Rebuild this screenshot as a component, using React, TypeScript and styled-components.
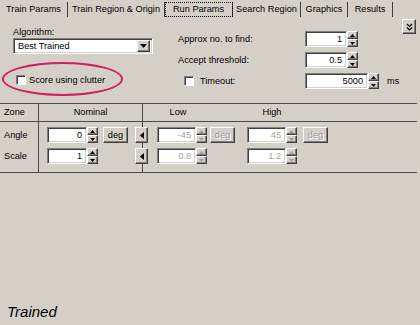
import React from 'react';
import styled, { createGlobalStyle, css } from 'styled-components';

const Global = createGlobalStyle`
  html, body { margin: 0; padding: 0; background: #d4d0c8; }
  body { font-family: "Liberation Sans", Arial, sans-serif; }
`;

const Window = styled.div`
  position: relative;
  width: 420px;
  height: 325px;
  background: #d4d0c8;
  color: #000;
  font-size: 9.2px;
  display: flex;
  flex-direction: column;
  overflow: hidden;
`;

const TabBar = styled.div`
  display: flex;
  height: 18px;
`;

const Tab = styled.div<{ $w: number; $active?: boolean }>`
  width: ${(p) => p.$w}px;
  box-sizing: border-box;
  height: 15px;
  margin-top: 2px;
  line-height: 15px;
  text-align: center;
  white-space: nowrap;
  border-right: 1px solid #404040;
  ${(p) =>
    p.$active &&
    css`
      outline: 1px dotted #000;
      outline-offset: -1px;
    `}
`;

const TopSection = styled.div`
  position: relative;
  height: 85px;
  display: flex;
  padding-left: 13px;
`;

const LeftCol = styled.div`
  width: 140px;
  padding-top: 8px;
  display: flex;
  flex-direction: column;
`;

const Label = styled.div`
  line-height: 12px;
  white-space: nowrap;
`;

const Select = styled.div`
  height: 16px;
  box-sizing: border-box;
  background: #fff;
  border: 1px solid;
  border-color: #808080 #fff #fff #808080;
  box-shadow: inset 1px 1px 0 #404040, inset -1px -1px 0 #d4d0c8;
  display: flex;
  align-items: center;
  padding: 2px 2px 2px 4px;
`;

const SelectText = styled.span`
  flex: 1;
  line-height: 12px;
`;

const Raised = css`
  box-sizing: border-box;
  background: #d4d0c8;
  border: 1px solid;
  border-color: #fff #404040 #404040 #fff;
  box-shadow: inset -1px -1px 0 #808080;
  display: flex;
  align-items: center;
  justify-content: center;
`;

const DropBtn = styled.div`
  ${Raised}
  width: 13px;
  height: 12px;
`;

const CheckRow = styled.div<{ $indent?: number }>`
  display: flex;
  align-items: center;
  gap: 3px;
  margin-left: ${(p) => p.$indent ?? 0}px;
  height: 13px;
  white-space: nowrap;
`;

const CheckBox = styled.div`
  width: 10px;
  height: 10px;
  box-sizing: border-box;
  background: #fff;
  border: 1px solid;
  border-color: #808080 #fff #fff #808080;
  box-shadow: inset 1px 1px 0 #404040;
`;

const Ellipse = styled.div`
  position: absolute;
  left: 2px;
  top: 44px;
  width: 121px;
  height: 34px;
  border: 2px solid #d2205c;
  border-radius: 50%;
  box-sizing: border-box;
  pointer-events: none;
`;

const RightCol = styled.div`
  margin-left: 25px;
  padding-top: 13px;
  display: grid;
  grid-template-columns: 127px auto;
  grid-auto-rows: 16px;
  row-gap: 5px;
  align-items: center;
  align-content: start;
`;

const FieldGroup = styled.div`
  display: flex;
  align-items: center;
`;

const Unit = styled.span`
  margin-left: 8px;
`;

const MoreBtn = styled.div`
  ${Raised}
  width: 14px;
  height: 15px;
  margin: 1px 4px 0 auto;
`;

const Field = styled.div<{ $w: number; $disabled?: boolean }>`
  width: ${(p) => p.$w}px;
  height: 16px;
  box-sizing: border-box;
  background: #fff;
  border: 1px solid;
  border-color: #808080 #fff #fff #808080;
  box-shadow: inset 1px 1px 0 #404040, inset -1px -1px 0 #d4d0c8;
  text-align: right;
  padding-right: 4px;
  line-height: 14px;
  color: ${(p) => (p.$disabled ? '#a3a3a3' : '#000')};
`;

const Spin = styled.div`
  display: flex;
  flex-direction: column;
  width: 11px;
  height: 16px;
`;

const SpinBtn = styled.div`
  ${Raised}
  flex: 1;
`;

const Btn = styled.div<{ $w: number; $disabled?: boolean }>`
  ${Raised}
  width: ${(p) => p.$w}px;
  height: 16px;
  line-height: 12px;
  color: ${(p) => (p.$disabled ? '#9a9a9a' : '#000')};
  ${(p) => p.$disabled && css`text-shadow: 1px 1px 0 #fff;`}
`;

const Section = styled.div`
  display: flex;
  width: 417px;
  border-top: 1px solid #4a4a4a;
  border-bottom: 1px solid #4a4a4a;
`;

const Column = styled.div<{ $w?: number }>`
  ${(p) => (p.$w ? css`width: ${p.$w}px;` : css`flex: 1;`)}
  box-sizing: border-box;
  display: flex;
  flex-direction: column;
  ${(p) => p.$w && css`border-right: 1px solid #4a4a4a;`}
`;

const HeaderCell = styled.div<{ $align?: string }>`
  height: 17px;
  border-bottom: 1px solid #4a4a4a;
  line-height: 16px;
  display: flex;
  justify-content: ${(p) => p.$align ?? 'center'};
  padding-left: ${(p) => (p.$align ? 4 : 0)}px;
`;

const HeaderPart = styled.span<{ $w: number }>`
  width: ${(p) => p.$w}px;
  text-align: center;
`;

const Body = styled.div<{ $pad?: number; $shift?: number }>`
  height: 50px;
  box-sizing: border-box;
  padding-top: 5px;
  padding-left: ${(p) => p.$pad ?? 0}px;
  margin-left: ${(p) => p.$shift ?? 0}px;
  display: flex;
  flex-direction: column;
  gap: 5px;
`;

const RowLabel = styled.div`
  height: 16px;
  line-height: 16px;
`;

const NomRow = styled.div`
  display: grid;
  grid-template-columns: 56px 25px;
  height: 16px;
`;

const RangeRow = styled.div`
  display: grid;
  grid-template-columns: 22px 53px 37px 56px 25px;
  height: 16px;
  position: relative;
`;

const Footer = styled.div`
  margin-top: auto;
  padding: 0 0 4px 7px;
  font-size: 15px;
  line-height: 18px;
  font-style: italic;
`;

const Tri = ({ dir, disabled }: { dir: 'up' | 'down'; disabled?: boolean }) => (
  <svg width="5" height="3" viewBox="0 0 5 3">
    <polygon
      points={dir === 'up' ? '0,3 5,3 2.5,0' : '0,0 5,0 2.5,3'}
      fill={disabled ? '#a0a0a0' : '#000'}
    />
  </svg>
);

const SpinField = ({
  value,
  w,
  disabled,
}: {
  value: string;
  w: number;
  disabled?: boolean;
}) => (
  <FieldGroup>
    <Field $w={w} $disabled={disabled}>
      {value}
    </Field>
    <Spin>
      <SpinBtn>
        <Tri dir="up" disabled={disabled} />
      </SpinBtn>
      <SpinBtn>
        <Tri dir="down" disabled={disabled} />
      </SpinBtn>
    </Spin>
  </FieldGroup>
);

const ArrowBtn = () => (
  <Btn $w={13}>
    <svg width="4" height="7" viewBox="0 0 4 7">
      <polygon points="4,0 4,7 0,3.5" fill="#000" />
    </svg>
  </Btn>
);

const tabs = [
  { label: 'Train Params', w: 68 },
  { label: 'Train Region & Origin', w: 97 },
  { label: 'Run Params', w: 68, active: true },
  { label: 'Search Region', w: 68 },
  { label: 'Graphics', w: 47 },
  { label: 'Results', w: 45 },
];

export default function App() {
  return (
    <>
      <Global />
      <Window>
        <TabBar>
          {tabs.map((t) => (
            <Tab key={t.label} $w={t.w} $active={t.active}>
              {t.label}
            </Tab>
          ))}
        </TabBar>

        <TopSection>
          <LeftCol>
            <Label>Algorithm:</Label>
            <Select>
              <SelectText>Best Trained</SelectText>
              <DropBtn>
                <svg width="7" height="4" viewBox="0 0 7 4">
                  <polygon points="0,0 7,0 3.5,4" fill="#000" />
                </svg>
              </DropBtn>
            </Select>
            <CheckRow $indent={3} style={{ marginTop: 19 }}>
              <CheckBox />
              <span>Score using clutter</span>
            </CheckRow>
          </LeftCol>

          <RightCol>
            <Label>Approx no. to find:</Label>
            <SpinField value="1" w={42} />
            <Label>Accept threshold:</Label>
            <SpinField value="0.5" w={42} />
            <CheckRow $indent={6}>
              <CheckBox />
              <span style={{ marginLeft: 3 }}>Timeout:</span>
            </CheckRow>
            <FieldGroup>
              <SpinField value="5000" w={63} />
              <Unit>ms</Unit>
            </FieldGroup>
          </RightCol>

          <MoreBtn>
            <svg width="7" height="8" viewBox="0 0 7 8">
              <polyline points="1,1 3.5,3.5 6,1" fill="none" stroke="#000" strokeWidth="1.2" />
              <polyline points="1,4.5 3.5,7 6,4.5" fill="none" stroke="#000" strokeWidth="1.2" />
            </svg>
          </MoreBtn>

          <Ellipse />
        </TopSection>

        <Section>
          <Column $w={39}>
            <HeaderCell $align="flex-start">Zone</HeaderCell>
            <Body $pad={4}>
              <RowLabel>Angle</RowLabel>
              <RowLabel>Scale</RowLabel>
            </Body>
          </Column>
          <Column $w={104}>
            <HeaderCell>Nominal</HeaderCell>
            <Body $pad={8}>
              <NomRow>
                <SpinField value="0" w={40} />
                <Btn $w={25}>deg</Btn>
              </NomRow>
              <NomRow>
                <SpinField value="1" w={40} />
              </NomRow>
            </Body>
          </Column>
          <Column>
            <HeaderCell $align="flex-start" style={{ paddingLeft: 0 }}>
              <HeaderPart $w={70}>Low</HeaderPart>
              <HeaderPart $w={118}>High</HeaderPart>
            </HeaderCell>
            <Body $shift={-8}>
              <RangeRow>
                <ArrowBtn />
                <SpinField value="-45" w={39} disabled />
                <Btn $w={25} $disabled>
                  deg
                </Btn>
                <SpinField value="45" w={39} disabled />
                <Btn $w={25} $disabled>
                  deg
                </Btn>
              </RangeRow>
              <RangeRow>
                <ArrowBtn />
                <SpinField value="0.8" w={39} disabled />
                <span />
                <SpinField value="1.2" w={39} disabled />
              </RangeRow>
            </Body>
          </Column>
        </Section>

        <Footer>Trained</Footer>
      </Window>
    </>
  );
}
